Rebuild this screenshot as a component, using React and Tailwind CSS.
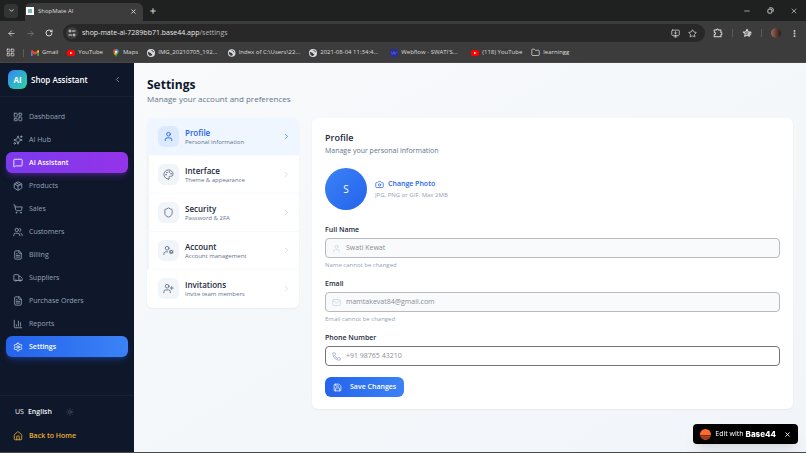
import React from 'react';
import {
  ArrowLeft, ArrowRight, Camera, ChartColumn, ChevronDown, ChevronLeft, ChevronRight,
  EllipsisVertical, FileText, Folder, House, LayoutDashboard, LayoutGrid, Mail,
  MessageSquare, Minus, MonitorDown, Package, Palette, Phone, Plus, RotateCw,
  Save, Settings, Shield, ShoppingCart, Sparkles, Star, Sun, Truck, User, UserCog,
  UserPlus, Users, X,
} from 'lucide-react';

const NAV_ITEMS = [
  { label: 'Dashboard', icon: LayoutDashboard },
  { label: 'AI Hub', icon: Sparkles },
  { label: 'AI Assistant', icon: MessageSquare, tone: 'purple' },
  { label: 'Products', icon: Package },
  { label: 'Sales', icon: ShoppingCart },
  { label: 'Customers', icon: Users },
  { label: 'Billing', icon: FileText },
  { label: 'Suppliers', icon: Truck },
  { label: 'Purchase Orders', icon: FileText },
  { label: 'Reports', icon: ChartColumn },
  { label: 'Settings', icon: Settings, tone: 'blue' },
];

const NAV_TONES = {
  purple: 'bg-gradient-to-r from-[#7c3aed] to-[#9333ea] font-semibold text-white shadow-md shadow-[#9333ea]/30',
  blue: 'bg-gradient-to-r from-[#2563eb] to-[#3b82f6] font-semibold text-white shadow-md shadow-[#2563eb]/30',
};

const SECTIONS = [
  { title: 'Profile', hint: 'Personal information', icon: User, active: true },
  { title: 'Interface', hint: 'Theme & appearance', icon: Palette },
  { title: 'Security', hint: 'Password & 2FA', icon: Shield },
  { title: 'Account', hint: 'Account management', icon: UserCog },
  { title: 'Invitations', hint: 'Invite team members', icon: UserPlus },
];

function GmailIcon() {
  return (
    <svg viewBox="0 0 24 18" className="w-2 h-2">
      <path d="M0 2v16h5V8z" fill="#4285f4" />
      <path d="M24 2v16h-5V8z" fill="#34a853" />
      <path d="M0 2l3-2 9 7 9-7 3 2v4l-12 9L0 6z" fill="#ea4335" />
      <path d="M19 3l2-3 3 2v4l-5 4z" fill="#fbbc04" />
    </svg>
  );
}

function YouTubeIcon() {
  return (
    <svg viewBox="0 0 24 24" className="w-2 h-2">
      <rect x="0" y="3" width="24" height="18" rx="5" fill="#f00" />
      <path d="M9.500 8v8l7-4z" fill="#fff" />
    </svg>
  );
}

function MapsIcon() {
  return (
    <svg viewBox="0 0 24 24" className="w-2 h-2">
      <path d="M12 24C10 17 4 14 4 8a8 8 0 0 1 16 0c0 6-6 9-8 16z" fill="#34a853" />
      <path d="M4 8a8 8 0 0 1 8-8v8l-6 6C5 12 4 10 4 8z" fill="#ea4335" />
      <path d="M12 0a8 8 0 0 1 8 8h-8z" fill="#4285f4" />
      <path d="M12 8l-6 6 3 4 9-10z" fill="#fbbc04" />
      <circle cx="12" cy="8" r="3" fill="#fff" />
    </svg>
  );
}

function GlobeIcon() {
  return (
    <svg viewBox="0 0 24 24" className="w-2 h-2">
      <circle cx="12" cy="12" r="12" fill="#dadce0" />
      <path d="M3 8c3 0 4 3 7 3s2 4 5 4-1 5-3 6C6 21 2 16 3 8z" fill="#3c3c3c" />
      <path d="M11 3c1 3 4 1 5 4s3 3 5 3c-1-4-5-8-10-7z" fill="#3c3c3c" />
    </svg>
  );
}

function WebflowIcon() {
  return (
    <svg viewBox="0 0 24 24" className="w-2 h-2">
      <rect width="24" height="24" rx="2" fill="#2b2f8f" />
      <path d="M4 8l3 8 5-8 2 8 6-8" fill="none" stroke="#5a62ee" strokeWidth="2.500" />
    </svg>
  );
}

function FolderIcon() {
  return <Folder className="w-[9px] h-[9px]" />;
}

function ExtensionsIcon() {
  return (
    <svg viewBox="0 0 24 24" className="w-[10px] h-[10px]" fill="none" stroke="currentColor" strokeWidth="2.500" strokeLinejoin="round">
      <path d="M3 5h5a2.500 2.500 0 0 1 5 0h6v6a2.500 2.500 0 0 1 0 5v5H3v-5a3 3 0 0 0 0-6z" />
    </svg>
  );
}

function SavedListIcon() {
  return (
    <svg viewBox="0 0 24 24" className="w-[10px] h-[10px]" fill="none" stroke="currentColor" strokeWidth="2.500" strokeLinejoin="round">
      <path d="M12 3l2.700 6 6.300.6-4.800 4.200L17.600 20 12 16.800 6.400 20l1.400-6.200L3 9.600 9.300 9z" />
      <path d="M9 12h14M13 16h9" />
    </svg>
  );
}

function RestoreIcon() {
  return (
    <svg viewBox="0 0 16 16" className="w-[7px] h-[7px]" fill="none" stroke="currentColor" strokeWidth="2">
      <rect x="2" y="5" width="9" height="9" rx="2" />
      <path d="M5 2h6a3 3 0 0 1 3 3v6" />
    </svg>
  );
}

const BOOKMARKS = [
  { label: 'Gmail', icon: GmailIcon },
  { label: 'YouTube', icon: YouTubeIcon },
  { label: 'Maps', icon: MapsIcon },
  { label: 'IMG_20210705_192...', icon: GlobeIcon, full: true },
  { label: 'Index of C:\\Users\\22...', icon: GlobeIcon, full: true },
  { label: '2021-08-04 11:34:4...', icon: GlobeIcon, full: true },
  { label: "Webflow - SWATI'S...", icon: WebflowIcon, full: true },
  { label: '(118) YouTube', icon: YouTubeIcon },
  { label: 'learningg', icon: FolderIcon },
];

function BrowserChrome() {
  return (
    <header className="shrink-0 bg-[#3c3c3c] text-[#dcdcdc] border-b border-[#4a4646]">
      <div className="flex items-stretch h-[21px] bg-[#1f2120]">
        <div className="flex items-center pl-1 pr-[7px]">
          <button aria-label="Search tabs" className="grid place-items-center w-[14px] h-[14px] rounded bg-[#333434]">
            <ChevronDown size={7} strokeWidth={3} />
          </button>
        </div>
        <div className="flex items-center w-[118px] mt-[3px] pl-[1px] pr-[6px] pb-[2px] rounded-t-md bg-[#3c3c3c]">
          <span className="grid place-items-center w-2 h-2 bg-white">
            <span className="w-1 h-1 bg-teal-700/50" />
          </span>
          <span className="flex-1 pl-1 text-[6px]">ShopMate AI</span>
          <button aria-label="Close tab"><X size={7} strokeWidth={3} /></button>
        </div>
        <button aria-label="New tab" className="pl-[6px]"><Plus size={8} strokeWidth={3} /></button>
        <div className="flex items-center gap-4 ml-auto pr-2">
          <button aria-label="Minimize"><Minus size={8} strokeWidth={2} /></button>
          <button aria-label="Restore"><RestoreIcon /></button>
          <button aria-label="Close window"><X size={8} strokeWidth={2} /></button>
        </div>
      </div>
      <div className="flex items-center h-6 px-[7px]">
        <div className="flex items-center gap-[10px] w-14">
          <button aria-label="Back"><ArrowLeft size={9} strokeWidth={2} /></button>
          <button aria-label="Forward" className="text-[#7c7c7c]"><ArrowRight size={9} strokeWidth={2} /></button>
          <button aria-label="Reload"><RotateCw size={8} strokeWidth={3} /></button>
        </div>
        <div className="flex flex-1 items-center h-[18px] pl-[3px] pr-2 rounded-full bg-[#282828]">
          <span className="grid place-items-center w-3 h-3 rounded-full bg-[#3c3c3c]">
            <svg viewBox="0 0 16 16" className="w-2 h-2" fill="none" stroke="currentColor" strokeWidth="2">
              <circle cx="4" cy="4" r="2" />
              <path d="M8 4h7M1 12h7" />
              <circle cx="12" cy="12" r="2" />
            </svg>
          </span>
          <span className="flex-1 pl-1 text-[7px] text-[#e6e6e6]">
            shop-mate-ai-7289bb71.base44.app<span className="text-[#b4b4b4]">/settings</span>
          </span>
          <div className="flex items-center gap-2">
            <button aria-label="Install app"><MonitorDown size={9} strokeWidth={2} /></button>
            <button aria-label="Bookmark this page"><Star size={9} strokeWidth={2} /></button>
          </div>
        </div>
        <div className="flex items-center gap-[9px] pl-2">
          <button aria-label="Extensions"><ExtensionsIcon /></button>
          <span className="w-px h-2 bg-[#5c5c5c]" />
          <button aria-label="Saved list"><SavedListIcon /></button>
          <span className="w-px h-2 bg-[#5c5c5c]" />
          <span className="w-[10px] h-[10px] rounded-full bg-gradient-to-r from-[#a06a58] to-[#2a1a16]" />
          <button aria-label="Menu"><EllipsisVertical size={9} strokeWidth={3} /></button>
        </div>
      </div>
      <nav aria-label="Bookmarks" className="flex items-center h-[17px] pl-[6px] pb-[2px] text-[6px]">
        <LayoutGrid size={9} strokeWidth={2} />
        <span className="w-px h-2 ml-2 mr-[7px] bg-[#5c5c5c]" />
        <div className="flex items-center gap-[9px]">
          {BOOKMARKS.map(({ label, icon: Icon, full }) => (
            <a key={label} href="#" className={`flex items-center gap-[3px] whitespace-nowrap ${full ? 'w-[72px]' : ''}`}>
              <Icon />
              {label}
            </a>
          ))}
        </div>
      </nav>
    </header>
  );
}

function Sidebar() {
  return (
    <aside className="flex flex-col shrink-0 w-[134px] bg-[#0f172a] text-[#94a3b8]">
      <div className="flex items-center h-[34px] px-2 border-b border-slate-800/60">
        <span className="grid place-items-center w-[19px] h-[19px] rounded-md bg-gradient-to-br from-[#3b82f6] to-[#34d399] text-[8px] font-bold text-white">
          AI
        </span>
        <span className="flex-1 pl-1 text-[8px] font-semibold text-white">Shop Assistant</span>
        <button aria-label="Collapse sidebar" className="pr-1"><ChevronLeft size={9} /></button>
      </div>
      <nav className="flex flex-col gap-[2px] px-[6px] pt-[9px]">
        {NAV_ITEMS.map(({ label, icon: Icon, tone }) => (
          <a
            key={label}
            href="#"
            className={`flex items-center gap-[6px] h-[21px] px-[7px] rounded-md text-[7px] ${tone ? NAV_TONES[tone] : 'font-medium'}`}
          >
            <Icon size={10} strokeWidth={2} />
            <span className="pt-px">{label}</span>
          </a>
        ))}
      </nav>
      <div className="flex flex-col gap-2 mt-auto py-2 px-[13px] border-t border-slate-800/60">
        <div className="flex items-center h-4">
          <button className="flex items-center gap-1 pl-[2px] text-[7px] text-slate-100">
            US <span className="font-semibold">English</span>
          </button>
          <button aria-label="Toggle theme" className="pl-[14px] text-slate-600"><Sun size={8} /></button>
        </div>
        <a href="#" className="flex items-center gap-[6px] h-4 text-[7px] font-semibold text-[#eab02f]">
          <House size={10} strokeWidth={2} />
          <span className="pt-px">Back to Home</span>
        </a>
      </div>
    </aside>
  );
}

function SectionList() {
  return (
    <nav aria-label="Settings sections" className="shrink-0 w-[152px] overflow-hidden rounded-md bg-white shadow-xs">
      {SECTIONS.map(({ title, hint, icon: Icon, active }) => (
        <a
          key={title}
          href="#"
          className={`flex items-center h-[38px] pl-[9px] pr-2 border-l-2 border-b border-b-slate-50 last:border-transparent ${active ? 'border-l-[#eff6ff] bg-[#eff6ff]' : 'border-l-slate-100'}`}
        >
          <span className={`grid place-items-center w-[21px] h-[21px] rounded-md ${active ? 'bg-[#dbeafe] text-[#2563eb]' : 'bg-[#f1f5f9] text-[#64748b]'}`}>
            <Icon size={11} strokeWidth={2} />
          </span>
          <span className="flex flex-col flex-1 pl-[6px] pt-px">
            <span className={`text-[8px] leading-[11px] font-semibold ${active ? 'text-[#2563eb]' : 'text-slate-800'}`}>{title}</span>
            <span className="text-[6px] leading-[9px] text-[#64748b]">{hint}</span>
          </span>
          <ChevronRight size={9} className={active ? 'text-[#3b82f6]' : 'text-slate-300'} />
        </a>
      ))}
    </nav>
  );
}

function Field({ id, label, icon: Icon, help, disabled, ...input }) {
  return (
    <div className="flex flex-col">
      <label htmlFor={id} className="mb-[3px] text-[7px] leading-[10px] font-semibold text-slate-800">{label}</label>
      <div
        className={`flex items-center gap-[5px] h-5 px-[6px] border rounded ${disabled ? 'border-[#b8babd] bg-slate-50 text-slate-300' : 'border-[#757575] bg-white text-slate-400'}`}
      >
        <Icon size={9} strokeWidth={2} />
        <input
          id={id}
          disabled={disabled}
          className="flex-1 min-w-0 pt-px bg-transparent text-[7px] text-[#8a8d93] placeholder:text-[#8a8d93] outline-none"
          {...input}
        />
      </div>
      {help && <p className="mt-[3px] text-[6px] leading-[9px] text-[#94a3b8]">{help}</p>}
    </div>
  );
}

function ProfileCard() {
  return (
    <section className="flex-1 px-[13px] pt-[14px] pb-3 rounded-md bg-white shadow-xs">
      <h2 className="text-[9px] leading-3 font-semibold text-slate-800">Profile</h2>
      <p className="mt-[2px] text-[7px] leading-[10px] text-[#64748b]">Manage your personal information</p>
      <div className="flex items-center gap-2 mt-3">
        <span className="grid place-items-center w-[42px] h-[42px] rounded-full bg-gradient-to-br from-[#3b82f6] to-[#2563eb] text-[10px] text-white">
          S
        </span>
        <div className="flex flex-col items-start gap-[2px] pt-px">
          <button className="flex items-center gap-1 text-[7px] leading-[10px] font-semibold text-[#2563eb]">
            <Camera size={9} strokeWidth={2} />
            Change Photo
          </button>
          <p className="text-[6px] leading-[9px] text-[#94a3b8]">JPG, PNG or GIF. Max 2MB</p>
        </div>
      </div>
      <form className="flex flex-col gap-[9px] mt-[15px]" onSubmit={(e) => e.preventDefault()}>
        <Field id="full-name" label="Full Name" icon={User} help="Name cannot be changed" disabled defaultValue="Swati Kewat" />
        <Field id="email" label="Email" icon={Mail} help="Email cannot be changed" disabled defaultValue="mamtakevat84@gmail.com" />
        <Field id="phone" label="Phone Number" icon={Phone} placeholder="+91 98765 43210" />
        <button
          type="submit"
          className="flex items-center self-start gap-2 h-5 px-2 mt-[2px] rounded-md bg-gradient-to-r from-[#2563eb] to-[#3b82f6] text-[7px] font-semibold text-white"
        >
          <Save size={9} strokeWidth={2} />
          Save Changes
        </button>
      </form>
    </section>
  );
}

function EditBadge() {
  return (
    <div className="fixed right-2 bottom-[9px] flex items-center h-5 px-[7px] rounded-sm bg-black text-white shadow-lg">
      <svg viewBox="0 0 24 24" className="w-[11px] h-[11px]">
        <path d="M0 12a12 12 0 0 1 24 0v1H0z" fill="#ff6a2b" />
        <path d="M0 14h24l-1 3H1z" fill="#e85c22" />
        <path d="M2 18h20l-2 3H4z" fill="#d0521f" />
        <path d="M6 22h12c-3 3-9 3-12 0z" fill="#b8441a" />
      </svg>
      <a href="#" className="flex items-center gap-[2px] pl-1 text-[7px]">
        Edit with <span className="text-[8px] font-extrabold font-['Inter','Liberation_Sans',sans-serif]">Base44</span>
      </a>
      <button aria-label="Dismiss" className="pl-2"><X size={7} strokeWidth={3} /></button>
    </div>
  );
}

export default function App() {
  return (
    <div className="flex flex-col min-h-screen border-b border-[#4a4a4a] font-['Open_Sans','Noto_Sans',sans-serif]">
      <BrowserChrome />
      <div className="flex flex-1">
        <Sidebar />
        <main className="flex-1 px-[13px] pt-[14px] bg-gradient-to-br from-slate-50 to-slate-100">
          <h1 className="text-[12px] leading-4 font-bold text-slate-900">Settings</h1>
          <p className="text-[8px] leading-3 text-[#64748b]">Manage your account and preferences</p>
          <div className="flex items-start gap-[13px] mt-[13px]">
            <SectionList />
            <ProfileCard />
          </div>
        </main>
      </div>
      <EditBadge />
    </div>
  );
}
